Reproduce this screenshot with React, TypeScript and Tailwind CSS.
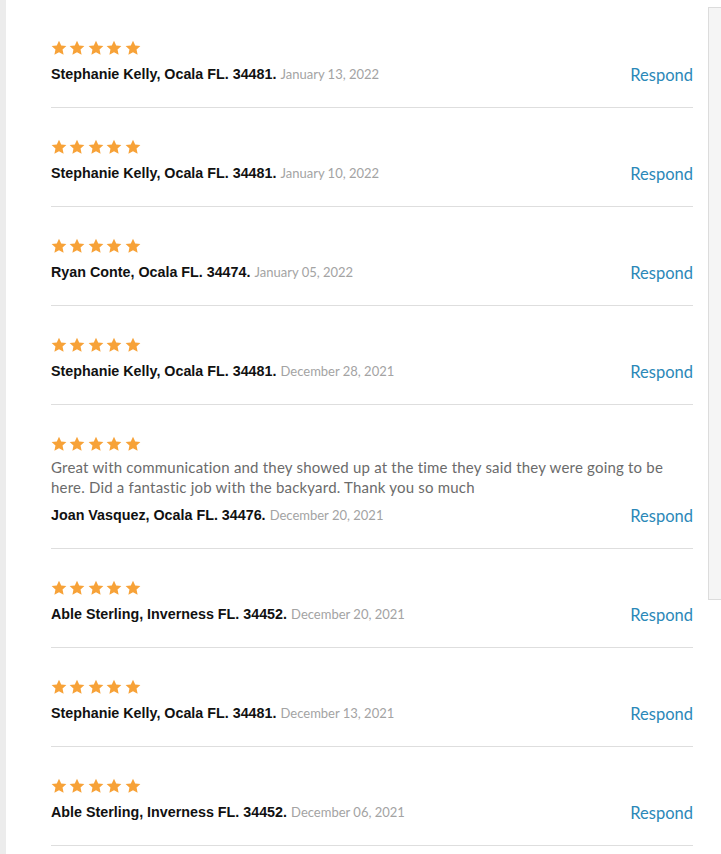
import React from "react";

type Review = { name: string; date: string; text?: string };

const reviews: Review[] = [
  { name: "Stephanie Kelly, Ocala FL. 34481.", date: "January 13, 2022" },
  { name: "Stephanie Kelly, Ocala FL. 34481.", date: "January 10, 2022" },
  { name: "Ryan Conte, Ocala FL. 34474.", date: "January 05, 2022" },
  { name: "Stephanie Kelly, Ocala FL. 34481.", date: "December 28, 2021" },
  {
    name: "Joan Vasquez, Ocala FL. 34476.",
    date: "December 20, 2021",
    text: "Great with communication and they showed up at the time they said they were going to be here. Did a fantastic job with the backyard. Thank you so much",
  },
  { name: "Able Sterling, Inverness FL. 34452.", date: "December 20, 2021" },
  { name: "Stephanie Kelly, Ocala FL. 34481.", date: "December 13, 2021" },
  { name: "Able Sterling, Inverness FL. 34452.", date: "December 06, 2021" },
];

function Star() {
  return (
    <svg width="16" height="16" viewBox="0 0 24 24" className="shrink-0">
      <path
        fill="#f7a238"
        d="M12 1.2l3.3 7.1 7.8.8-5.8 5.3 1.6 7.7L12 18.2l-6.9 3.9 1.6-7.7L.9 9.1l7.8-.8z"
      />
    </svg>
  );
}

function Stars() {
  return (
    <div className="flex h-4 gap-[2.4px]">
      {[0, 1, 2, 3, 4].map((i) => (
        <Star key={i} />
      ))}
    </div>
  );
}

export default function App() {
  return (
    <div
      className="relative flex min-h-[854px] w-[721px] bg-white"
      style={{ fontFamily: "Lato, 'Liberation Sans', sans-serif" }}
    >
      <div className="w-[6px] shrink-0 bg-[#ececec]" />
      <div className="flex-1 pl-[45px] pr-[28px] pt-[9px]">
        {reviews.map((r, i) => (
          <div key={i} className="border-b border-[#dedede] pt-[31px] pb-[24px]">
            <Stars />
            {r.text && (
              <p className="mt-[5px] text-[15px] leading-[20px] tracking-[0.2px] text-[#6b6b6b]">
                {r.text}
              </p>
            )}
            <div className="mt-[7px] flex h-[20px] items-baseline justify-between leading-[20px]">
              <div>
                <span className="font-['Liberation_Sans',sans-serif] text-[14.3px] font-bold text-[#111]">
                  {r.name}
                </span>{" "}
                <span className="text-[13px] text-[#a3a3a3]">{r.date}</span>
              </div>
              <span className="relative top-[1.5px] text-[16.5px] text-[#2b88b8]">Respond</span>
            </div>
          </div>
        ))}
      </div>
      <div className="absolute right-0 top-[7px] h-[593px] w-[13px] border border-r-0 border-[#dcdcdc] bg-[#f5f5f5]" />
    </div>
  );
}
